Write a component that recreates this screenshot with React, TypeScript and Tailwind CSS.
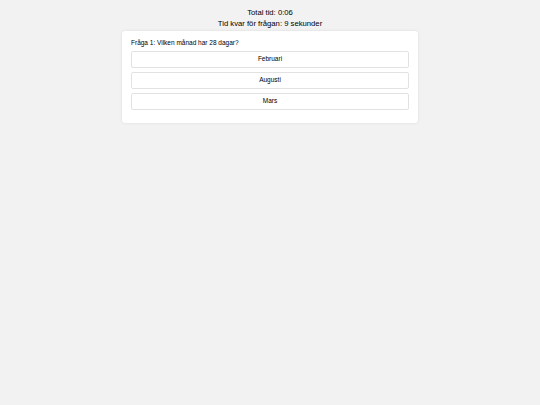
import React from "react";

const answers = ["Februari", "Augusti", "Mars"];

export default function App() {
  return (
    <div
      className="min-h-screen w-full bg-[#f2f2f2] text-black"
      style={{ fontFamily: '"Liberation Sans", Arial, sans-serif' }}
    >
      <div className="flex flex-col items-center pt-[7px]">
        <div className="text-center text-[7.7px] leading-[11px]">
          <div>Total tid: 0:06</div>
          <div>Tid kvar för frågan: 9 sekunder</div>
        </div>

        <div className="mt-[2px] w-[296px] rounded-[3px] bg-white px-[9px] pt-[7px] pb-[13px] shadow-[0_0_3px_rgba(0,0,0,0.1)]">
          <p className="mb-[4px] text-[6.5px] leading-[9px]">
            Fråga 1: Vilken månad har 28 dagar?
          </p>
          <div className="flex flex-col gap-[4px]">
            {answers.map((a) => (
              <button
                key={a}
                className="h-[17px] w-full rounded-[2px] border border-[#e2e2e2] bg-white text-center text-[6.5px] leading-none"
              >
                {a}
              </button>
            ))}
          </div>
        </div>
      </div>
    </div>
  );
}
